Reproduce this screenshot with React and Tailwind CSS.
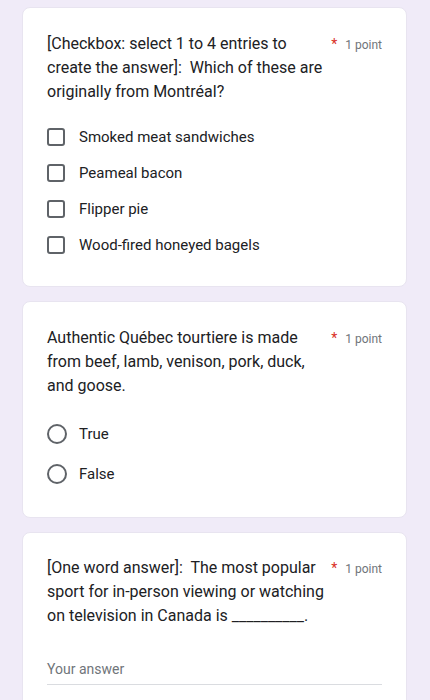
export default function App() {
  const font = { fontFamily: "Roboto, 'Liberation Sans', sans-serif" };
  const Points = () => (
    <div className="flex items-start shrink-0 pt-[5px]">
      <span className="text-[#d93025] text-[14px] leading-[14px] mr-[8px]">*</span>
      <span className="text-[#70757a] text-[12px] leading-[16px]">1 point</span>
    </div>
  );
  return (
    <div className="w-[430px] h-[700px] overflow-hidden bg-[#f0ebf8] pt-[7px] pl-[22px] pr-[23px] flex flex-col gap-[14px]" style={font}>
      <div className="bg-white rounded-[8px] border border-[#e8e4f0] pt-[24px] pb-[23px] px-[24px]">
        <div className="flex justify-between">
          <div className="w-[280px] text-[16px] leading-[24px] text-[#202124]">
            [Checkbox: select 1 to 4 entries to create the answer]:&nbsp; Which of these are originally from Montréal?
          </div>
          <Points />
        </div>
        <div className="mt-[15px] flex flex-col">
          {["Smoked meat sandwiches", "Peameal bacon", "Flipper pie", "Wood-fired honeyed bagels"].map((t) => (
            <div key={t} className="h-[36px] flex items-center">
              <div className="w-[18px] h-[18px] border-2 border-[#5f6368] rounded-[3px] shrink-0" />
              <span className="ml-[14px] text-[15px] text-[#202124]">{t}</span>
            </div>
          ))}
        </div>
      </div>
      <div className="bg-white rounded-[8px] border border-[#e8e4f0] pt-[24px] pb-[23px] px-[24px]">
        <div className="flex justify-between">
          <div className="w-[280px] text-[16px] leading-[24px] text-[#202124]">
            Authentic Québec tourtiere is made from beef, lamb, venison, pork, duck, and goose.
          </div>
          <Points />
        </div>
        <div className="mt-[16px] flex flex-col">
          {["True", "False"].map((t) => (
            <div key={t} className="h-[40px] flex items-center">
              <div className="w-[20px] h-[20px] border-2 border-[#5f6368] rounded-full shrink-0" />
              <span className="ml-[12px] text-[15px] text-[#202124]">{t}</span>
            </div>
          ))}
        </div>
      </div>
      <div className="bg-white rounded-[8px] border border-[#e8e4f0] pt-[23px] pb-[24px] px-[24px] flex-1">
        <div className="flex justify-between">
          <div className="w-[285px] text-[16px] leading-[24px] text-[#202124]">
            [One word answer]:&nbsp; The most popular sport for in-person viewing or watching on television in Canada is __________.
          </div>
          <Points />
        </div>
        <div className="mt-[32px] h-[25px] border-b border-[#dadce0] text-[14px] leading-[18px] text-[#70757a]">
          Your answer
        </div>
      </div>
    </div>
  );
}
